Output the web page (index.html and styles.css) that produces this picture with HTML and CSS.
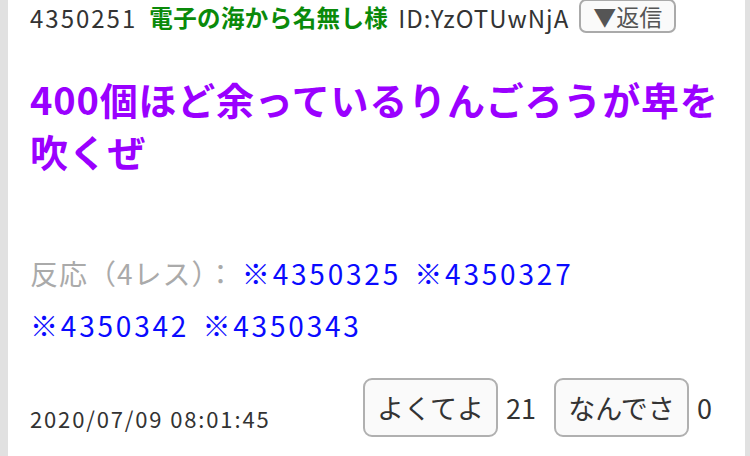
FILE: index.html
```html
<!DOCTYPE html>
<html lang="ja">
<head>
  <meta charset="UTF-8" />
  <meta name="viewport" content="width=device-width, initial-scale=1" />
  <title>りんごろう</title>
  <link rel="stylesheet" href="styles.css">
</head>
<body>

  <div class="card">
    <div class="res-head">
      <span class="res-no">4350251</span>
      <span class="res-name">電子の海から名無し様</span>
      <span class="res-id">ID:YzOTUwNjA</span>
      <button class="reply-btn">▼返信</button>
    </div>

    <h1 class="res-body">400個ほど余っているりんごろうが卑を吹くぜ</h1>

    <div class="res-refs">
      <span class="refs-label">反応（4レス）：</span>
      <a href="#" class="ref">※4350325</a>
      <a href="#" class="ref">※4350327</a>
      <a href="#" class="ref">※4350342</a>
      <a href="#" class="ref">※4350343</a>
    </div>

    <div class="res-foot">
      <span class="res-date">2020/07/09 08:01:45</span>
      <div class="votes">
        <button class="vote-btn">よくてよ</button>
        <span class="vote-count good">21</span>
        <button class="vote-btn">なんでさ</button>
        <span class="vote-count bad">0</span>
      </div>
    </div>
  </div>

</body>
</html>
```

FILE: styles.css
```css
html, body {
  margin: 0;
  padding: 0;
  height: 100%;
  background: #e1e1e1;
  font-family: "Noto Sans CJK JP", "Noto Sans", sans-serif;
  color: #333;
}

.card {
  margin: 0 5px 0 8px;
  height: 100%;
  background: #fff;
  padding: 0 20px 0 22px;
  box-sizing: border-box;
  overflow: hidden;
}

.res-head {
  display: flex;
  align-items: center;
  height: 34px;
  font-size: 24px;
  white-space: nowrap;
}

.res-no {
  color: #333;
  letter-spacing: 2px;
  margin-right: 12px;
}

.res-name {
  color: #0a8a0a;
  font-weight: bold;
  font-size: 23.5px;
  letter-spacing: 0.4px;
  margin-right: 10px;
}

.res-id {
  color: #333;
  letter-spacing: 1px;
  margin-right: 10px;
}

.reply-btn {
  font-family: inherit;
  font-size: 23px;
  color: #555;
  background: #fafafa;
  border: 2px solid #aaa;
  border-radius: 7px;
  height: 34px;
  padding: 0 12px;
  margin-top: -2px;
  line-height: 28px;
}

.res-body {
  margin: 39px -15px 0 0;
  font-size: 38px;
  line-height: 52px;
  font-weight: bold;
  color: #9a00ff;
  letter-spacing: 0.8px;
}

.res-refs {
  margin: 70px 0 0 0;
  font-size: 28px;
  line-height: 52px;
}

.refs-label {
  color: #aaa;
  letter-spacing: 1px;
}

.ref {
  color: #0a0aff;
  text-decoration: none;
  letter-spacing: 2.8px;
  margin-right: 7px;
}

.res-foot {
  display: flex;
  justify-content: space-between;
  align-items: flex-end;
  margin: 27px 0 0 0;
}

.res-date {
  font-size: 22px;
  line-height: 30px;
  letter-spacing: 1.85px;
  margin-bottom: 4px;
}

.votes {
  display: flex;
  align-items: center;
  margin-right: 13px;
}

.vote-btn {
  font-family: inherit;
  font-size: 27px;
  color: #333;
  background: #fafafa;
  border: 2px solid #b0b0b0;
  border-radius: 9px;
  width: 135px;
  height: 59px;
  padding: 0;
}

.vote-count {
  font-size: 27px;
  color: #333;
}

.good {
  margin: 0 18px 0 8px;
}

.bad {
  margin-left: 8px;
}
```
